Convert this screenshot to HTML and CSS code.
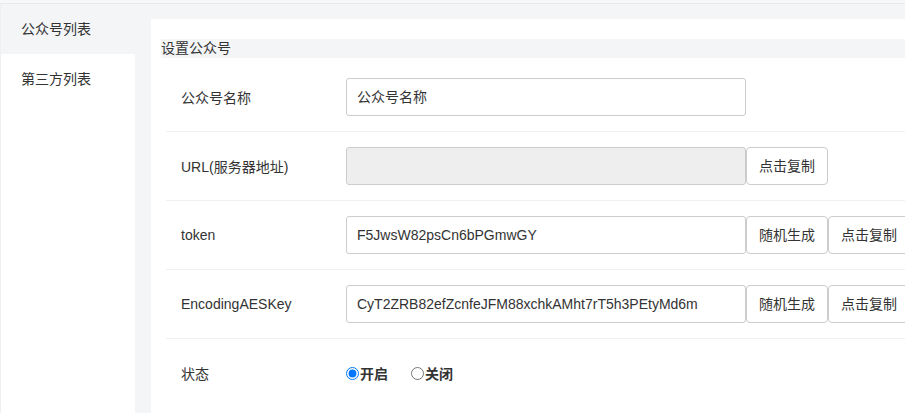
FILE: index.html
```html
<!DOCTYPE html>
<html lang="zh-CN">
<head>
<meta charset="utf-8">
<title>设置公众号</title>
<link rel="stylesheet" href="styles.css">
</head>
<body>
<div class="topbar"></div>
<div class="layout">
  <aside class="sidebar">
    <div class="nav-item active">公众号列表</div>
    <div class="nav-item">第三方列表</div>
  </aside>
  <main class="main">
    <section class="card">
      <div class="card-title">设置公众号</div>
      <div class="form">
        <div class="row">
          <div class="label">公众号名称</div>
          <div class="field"><div class="input">公众号名称</div></div>
        </div>
        <div class="row">
          <div class="label">URL(服务器地址)</div>
          <div class="field"><div class="input disabled"></div><div class="btn">点击复制</div></div>
        </div>
        <div class="row">
          <div class="label">token</div>
          <div class="field"><div class="input">F5JwsW82psCn6bPGmwGY</div><div class="btn">随机生成</div><div class="btn">点击复制</div></div>
        </div>
        <div class="row">
          <div class="label">EncodingAESKey</div>
          <div class="field"><div class="input">CyT2ZRB82efZcnfeJFM88xchkAMht7rT5h3PEtyMd6m</div><div class="btn">随机生成</div><div class="btn">点击复制</div></div>
        </div>
        <div class="row last">
          <div class="label">状态</div>
          <div class="field">
            <label class="radio"><input type="radio" name="status" checked><span>开启</span></label>
            <label class="radio"><input type="radio" name="status"><span>关闭</span></label>
          </div>
        </div>
      </div>
    </section>
  </main>
</div>
</body>
</html>
```
FILE: styles.css
```css
* { box-sizing: border-box; }
html, body {
  margin: 0;
  width: 905px;
  height: 413px;
  overflow: hidden;
}
body {
  font-family: "Liberation Sans", "Noto Sans CJK SC", sans-serif;
  font-size: 14px;
  color: #333;
  background: #f4f5f7;
}
.topbar {
  height: 4px;
  background: #f8f8f8;
  border-bottom: 1px solid #e9e9e9;
}
.layout {
  display: flex;
  height: 409px;
}
.sidebar {
  width: 135px;
  flex: none;
  background: #fff;
  border-left: 1px solid #f0f0f0;
}
.nav-item {
  height: 50px;
  line-height: 50px;
  padding-left: 20px;
}
.nav-item.active {
  background: #f4f5f7;
}
.main {
  flex: 1;
  min-width: 0;
  padding: 15px 0 0 16px;
  overflow: hidden;
}
.card {
  background: #fff;
  width: 800px;
  height: 420px;
  padding: 20px 0 0 10px;
}
.card-title {
  height: 19px;
  line-height: 19px;
  background: #f4f5f7;
}
.form {
  margin: 5px 0 0 5px;
}
.row {
  display: flex;
  align-items: center;
  padding: 15px 0 15px 15px;
  border-bottom: 1px solid #eef1f3;
}
.row.last { border-bottom: none; }
.label {
  width: 165px;
  flex: none;
}
.field {
  display: flex;
  align-items: center;
  min-height: 38px;
}
.input {
  width: 400px;
  height: 38px;
  line-height: 36px;
  border: 1px solid #ccc;
  border-radius: 3px;
  padding: 0 10px;
  background: #fff;
  white-space: nowrap;
  overflow: hidden;
}
.input.disabled {
  background: #eee;
}
.btn {
  width: 82px;
  height: 38px;
  line-height: 36px;
  border: 1px solid #ccc;
  border-radius: 4px;
  text-align: center;
  background: #fff;
  flex: none;
}
.radio {
  display: inline-flex;
  align-items: center;
  font-weight: bold;
  margin-right: 23px;
}
.radio input {
  margin: 0 1px 0 0;
  width: 13px;
  height: 13px;
}
```
